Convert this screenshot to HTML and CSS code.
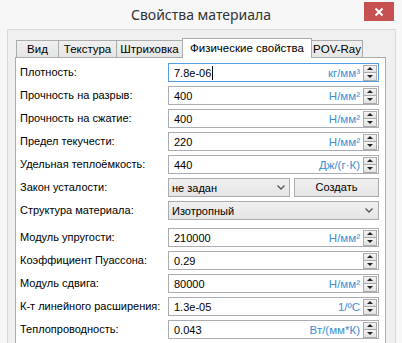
FILE: index.html
```html
<!DOCTYPE html>
<html lang="ru">
<head>
    <meta charset="UTF-8">
    <meta name="viewport" content="width=device-width, initial-scale=1.0">
    <title>Свойства материала</title>
    <link rel="stylesheet" href="styles.css">
</head>
<body>
    <div class="window">
        <div class="titlebar">
            <div></div>
            <div class="title">Свойства материала</div>
            <div class="close">
                <svg width="10" height="10" viewBox="0 0 10 10"><path d="M1.5 1.5 L8.5 8.5 M8.5 1.5 L1.5 8.5" stroke="#fff" stroke-width="2" fill="none"/></svg>
            </div>
        </div>

        <div class="client">
            <div class="tabs">
                <div class="tab tab-view">Вид</div>
                <div class="tab tab-texture">Текстура</div>
                <div class="tab tab-hatch">Штриховка</div>
                <div class="tab tab-phys active">Физические свойства</div>
                <div class="tab tab-pov">POV-Ray</div>
            </div>

            <div class="panel">
                <div class="form">
                    <div class="label">Плотность:</div>
                    <div class="field focused">
                        <span class="value">7.8e-06</span><span class="caret"></span>
                        <span class="unit">кг/мм³</span>
                        <div class="spin"><div class="spin-btn up"></div><div class="spin-btn down"></div></div>
                    </div>

                    <div class="label">Прочность на разрыв:</div>
                    <div class="field">
                        <span class="value">400</span>
                        <span class="unit">Н/мм²</span>
                        <div class="spin"><div class="spin-btn up"></div><div class="spin-btn down"></div></div>
                    </div>

                    <div class="label">Прочность на сжатие:</div>
                    <div class="field">
                        <span class="value">400</span>
                        <span class="unit">Н/мм²</span>
                        <div class="spin"><div class="spin-btn up"></div><div class="spin-btn down"></div></div>
                    </div>

                    <div class="label">Предел текучести:</div>
                    <div class="field">
                        <span class="value">220</span>
                        <span class="unit">Н/мм²</span>
                        <div class="spin"><div class="spin-btn up"></div><div class="spin-btn down"></div></div>
                    </div>

                    <div class="label">Удельная теплоёмкость:</div>
                    <div class="field">
                        <span class="value">440</span>
                        <span class="unit">Дж/(г·К)</span>
                        <div class="spin"><div class="spin-btn up"></div><div class="spin-btn down"></div></div>
                    </div>

                    <div class="label">Закон усталости:</div>
                    <div class="pair">
                        <div class="combo combo-small">
                            <span>не задан</span>
                            <svg class="chevron" width="8" height="5" viewBox="0 0 8 5"><path d="M0.5 0.5 L4 4 L7.5 0.5" stroke="#555" stroke-width="1.3" fill="none"/></svg>
                        </div>
                        <div class="button">Создать</div>
                    </div>

                    <div class="label">Структура материала:</div>
                    <div class="combo">
                        <span>Изотропный</span>
                        <svg class="chevron" width="8" height="5" viewBox="0 0 8 5"><path d="M0.5 0.5 L4 4 L7.5 0.5" stroke="#555" stroke-width="1.3" fill="none"/></svg>
                    </div>
                </div>

                <div class="form second">
                    <div class="label">Модуль упругости:</div>
                    <div class="field">
                        <span class="value">210000</span>
                        <span class="unit">Н/мм²</span>
                        <div class="spin"><div class="spin-btn up"></div><div class="spin-btn down"></div></div>
                    </div>

                    <div class="label">Коэффициент Пуассона:</div>
                    <div class="field">
                        <span class="value">0.29</span>
                        <span class="unit"></span>
                        <div class="spin"><div class="spin-btn up"></div><div class="spin-btn down"></div></div>
                    </div>

                    <div class="label">Модуль сдвига:</div>
                    <div class="field">
                        <span class="value">80000</span>
                        <span class="unit">Н/мм²</span>
                        <div class="spin"><div class="spin-btn up"></div><div class="spin-btn down"></div></div>
                    </div>

                    <div class="label">К-т линейного расширения:</div>
                    <div class="field">
                        <span class="value">1.3e-05</span>
                        <span class="unit">1/ºC</span>
                        <div class="spin"><div class="spin-btn up"></div><div class="spin-btn down"></div></div>
                    </div>

                    <div class="label">Теплопроводность:</div>
                    <div class="field">
                        <span class="value">0.043</span>
                        <span class="unit">Вт/(мм*К)</span>
                        <div class="spin"><div class="spin-btn up"></div><div class="spin-btn down"></div></div>
                    </div>
                </div>
            </div>
        </div>
    </div>
</body>
</html>
```

FILE: styles.css
```css
* {
    box-sizing: border-box;
}
body {
    margin: 0;
    font-family: "Liberation Sans", Arial, sans-serif;
    font-size: 11px;
    color: #000;
}
.window {
    width: 402px;
    height: 343px;
    overflow: hidden;
    background: #f7f7f7;
}
.titlebar {
    height: 29px;
    display: grid;
    grid-template-columns: 1fr auto 1fr;
}
.title {
    font-family: "Noto Sans", "Open Sans", sans-serif;
    font-size: 14px;
    color: #333;
    padding-top: 5px;
}
.close {
    justify-self: end;
    margin-top: 2px;
    margin-right: 8px;
    width: 30px;
    height: 19px;
    background: #c75050;
    display: flex;
    align-items: center;
    justify-content: center;
}
.client {
    margin-left: 7px;
    width: 389px;
    height: 320px;
    background: #f0f0f0;
    border: 1px solid #d9d9d9;
    border-bottom: none;
    padding-top: 8px;
}
.tabs {
    display: flex;
    align-items: flex-end;
    height: 19px;
    margin-left: 8px;
}
.tab {
    height: 17px;
    border: 1px solid #acacac;
    border-bottom: none;
    background: linear-gradient(#f0f0f0, #e5e5e5);
    margin-left: -1px;
    text-align: center;
    line-height: 16px;
    white-space: nowrap;
    font-size: 11.5px;
}
.tab.active {
    position: relative;
    z-index: 1;
    height: 20px;
    margin-bottom: -1px;
    background: #fff;
    line-height: 18px;
}
.tab-view { width: 43px; margin-left: 0; }
.tab-texture { width: 59px; }
.tab-hatch { width: 67px; }
.tab-phys { width: 130px; }
.tab-pov { width: 52px; }
.panel {
    margin-left: 7px;
    width: 371px;
    height: 300px;
    background: #fff;
    border: 1px solid #acacac;
    padding: 5px 5px 0 4px;
}
.form {
    display: grid;
    grid-template-columns: 148px 211px;
    grid-auto-rows: 19px;
    row-gap: 4px;
    align-items: center;
}
.form.second {
    margin-top: 8px;
}
.label {
    white-space: nowrap;
    padding-bottom: 1px;
}
.field {
    height: 19px;
    display: flex;
    align-items: center;
    border: 1px solid #abadb3;
    padding: 0 1px 0 5px;
}
.field.focused {
    border-color: #569de5;
}
.caret {
    width: 1px;
    height: 14px;
    background: #000;
    margin-left: 1px;
}
.value {
    white-space: nowrap;
}
.unit {
    margin-left: auto;
    margin-right: 3px;
    color: #3a8ed6;
    white-space: nowrap;
    font-size: 11.5px;
}
.spin {
    width: 14px;
    height: 16px;
    display: flex;
    flex-direction: column;
}
.spin-btn {
    height: 8px;
    border: 1px solid #acacac;
    background: linear-gradient(#f4f4f4, #e2e2e2);
    display: flex;
    align-items: center;
    justify-content: center;
}
.spin-btn.down {
    border-top: none;
}
.spin-btn.up::after {
    content: "";
    border-left: 3px solid transparent;
    border-right: 3px solid transparent;
    border-bottom: 3px solid #222;
}
.spin-btn.down::after {
    content: "";
    border-left: 3px solid transparent;
    border-right: 3px solid transparent;
    border-top: 3px solid #222;
}
.pair {
    display: flex;
    gap: 4px;
    height: 19px;
}
.combo {
    height: 19px;
    display: flex;
    align-items: center;
    justify-content: space-between;
    border: 1px solid #acacac;
    background: linear-gradient(#f0f0f0, #e5e5e5);
    padding: 0 5px 0 3px;
}
.combo-small {
    width: 122px;
    padding-right: 4px;
}
.button {
    flex: 1;
    height: 19px;
    border: 1px solid #acacac;
    background: linear-gradient(#f0f0f0, #e5e5e5);
    text-align: center;
    line-height: 17px;
}
```
